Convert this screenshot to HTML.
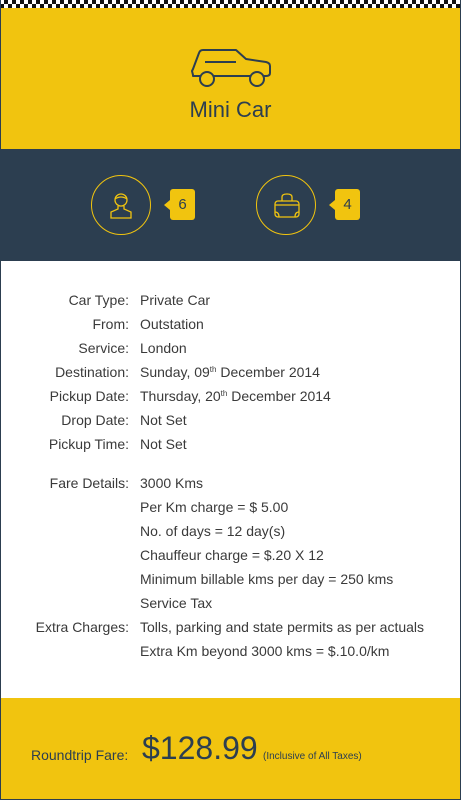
<!DOCTYPE html>
<html><head><style>
*{margin:0;padding:0;box-sizing:border-box}
body{width:461px;height:800px;overflow:hidden;background:#fff;font-family:"Liberation Sans",sans-serif;position:relative}
.frame{position:absolute;left:0;top:0;width:461px;height:800px;border:1px solid #2c3e50;border-top:none}
.check{position:absolute;left:0;top:0;width:461px;height:8px;background-color:#fff;
background-image:linear-gradient(45deg,#111 25%,transparent 25%,transparent 75%,#111 75%),linear-gradient(45deg,#111 25%,transparent 25%,transparent 75%,#111 75%);
background-size:8px 8px;background-position:0 0,4px 4px}
.top{position:absolute;left:0;top:8px;width:461px;height:141px;background:#f1c40f}
.title{position:absolute;left:0;width:461px;top:89px;text-align:center;font-size:22px;color:#2c3e50}
.dark{position:absolute;left:0;top:149px;width:461px;height:112px;background:#2c3e50}
.circ{position:absolute;width:60px;height:60px;border:1.5px solid #f1c40f;border-radius:50%;top:26px}
.badge{position:absolute;top:40px;width:25px;height:31px;background:#f1c40f;border-radius:3px;color:#2c3e50;font-size:15px;text-align:center;line-height:31px}
.badge:before{content:"";position:absolute;left:-6px;top:11px;border:5px solid transparent;border-right:6px solid #f1c40f;border-left:0}
.row{position:absolute;left:0;width:461px;font-size:14px;color:#3a3a3a;height:24px;line-height:24px}
.row .l{position:absolute;right:332px;text-align:right;white-space:nowrap}
.row .v{position:absolute;left:140px;white-space:nowrap}
sup{font-size:8px;vertical-align:5px;line-height:0}
.foot{position:absolute;left:0;top:698px;width:461px;height:102px;background:#f1c40f;border:1px solid #2c3e50;border-top:none}
</style></head><body>
<div class="check"></div>
<div class="top">
<svg style="position:absolute;left:190px;top:37px" width="84" height="44" viewBox="0 0 84 44">
<path d="M3 30 L2 26 L3 24 L9 8 Q10 5 13 5 L46 5 L56 14 L76 17 Q80 18 80 21 L80 28 Q80 31 76 31 L3 31 Z" fill="none" stroke="#2c3e50" stroke-width="2" stroke-linejoin="round"/>
<line x1="15" y1="17" x2="46" y2="17" stroke="#2c3e50" stroke-width="2"/>
<circle cx="17" cy="34" r="7" fill="#f1c40f" stroke="#2c3e50" stroke-width="2"/>
<circle cx="67" cy="34" r="7" fill="#f1c40f" stroke="#2c3e50" stroke-width="2"/>
</svg>
<div class="title">Mini Car</div>
</div>
<div class="dark">
<div class="circ" style="left:91px"></div>
<svg style="position:absolute;left:108px;top:42px" width="26" height="30" viewBox="0 0 26 30">
<circle cx="13" cy="9" r="6" fill="none" stroke="#f1c40f" stroke-width="1.3"/>
<path d="M7 8 Q13 4 19 8" fill="none" stroke="#f1c40f" stroke-width="1.3"/>
<path d="M10 15 L10 18 L3 21 L3 27 L23 27 L23 21 L16 18 L16 15" fill="none" stroke="#f1c40f" stroke-width="1.3"/>
</svg>
<div class="badge" style="left:170px">6</div>
<div class="circ" style="left:256px"></div>
<svg style="position:absolute;left:272px;top:42px" width="30" height="30" viewBox="0 0 30 30">
<path d="M10 10 L10 6 Q10 3 15 3 Q20 3 20 6 L20 10" fill="none" stroke="#f1c40f" stroke-width="1.3"/>
<rect x="3" y="10" width="24" height="16" rx="3" fill="none" stroke="#f1c40f" stroke-width="1.3"/>
<line x1="3" y1="14" x2="27" y2="14" stroke="#f1c40f" stroke-width="1.3"/>
<path d="M3 21 Q7 21 7 26 M27 21 Q23 21 23 26" fill="none" stroke="#f1c40f" stroke-width="1.3"/>
</svg>
<div class="badge" style="left:335px">4</div>
</div>

<div class="row" style="top:288px"><span class="l">Car Type:</span><span class="v">Private Car</span></div>
<div class="row" style="top:312px"><span class="l">From:</span><span class="v">Outstation</span></div>
<div class="row" style="top:336px"><span class="l">Service:</span><span class="v">London</span></div>
<div class="row" style="top:360px"><span class="l">Destination:</span><span class="v">Sunday, 09<sup>th</sup> December 2014</span></div>
<div class="row" style="top:384px"><span class="l">Pickup Date:</span><span class="v">Thursday, 20<sup>th</sup> December 2014</span></div>
<div class="row" style="top:408px"><span class="l">Drop Date:</span><span class="v">Not Set</span></div>
<div class="row" style="top:432px"><span class="l">Pickup Time:</span><span class="v">Not Set</span></div>
<div class="row" style="top:471px"><span class="l">Fare Details:</span><span class="v">3000 Kms</span></div>
<div class="row" style="top:495px"><span class="v">Per Km charge = $ 5.00</span></div>
<div class="row" style="top:519px"><span class="v">No. of days = 12 day(s)</span></div>
<div class="row" style="top:543px"><span class="v">Chauffeur charge = $.20 X 12</span></div>
<div class="row" style="top:567px"><span class="v">Minimum billable kms per day = 250 kms</span></div>
<div class="row" style="top:591px"><span class="v">Service Tax</span></div>
<div class="row" style="top:615px"><span class="l">Extra Charges:</span><span class="v">Tolls, parking and state permits as per actuals</span></div>
<div class="row" style="top:639px"><span class="v">Extra Km beyond 3000 kms = $.10.0/km</span></div>

<div class="frame"></div>
<div class="foot">
<div style="position:absolute;left:30px;top:49px;font-size:14px;color:#2c3e50">Roundtrip Fare:</div>
<div style="position:absolute;left:141px;top:32px;font-size:32px;color:#2c3e50">$128.99</div>
<div style="position:absolute;left:262px;top:53px;font-size:10px;color:#2c3e50">(Inclusive of All Taxes)</div>
</div>
</body></html>
